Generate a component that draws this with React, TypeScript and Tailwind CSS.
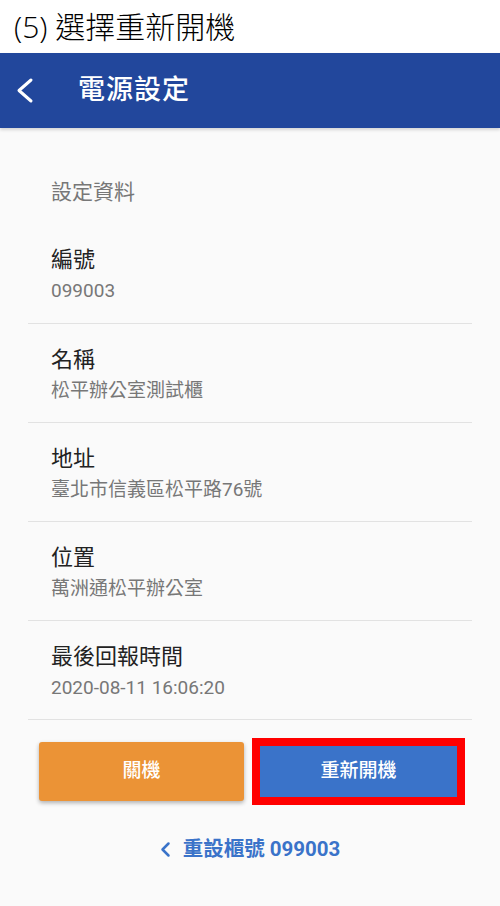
const CJK = "font-['Roboto','Noto_Sans_CJK_TC',sans-serif]";

const rows = [
  { label: "編號", value: "099003" },
  { label: "名稱", value: "松平辦公室測試櫃" },
  { label: "地址", value: "臺北市信義區松平路76號" },
  { label: "位置", value: "萬洲通松平辦公室" },
  { label: "最後回報時間", value: "2020-08-11 16:06:20" },
];

function Chevron({ className, w, h, sw }: { className?: string; w: number; h: number; sw: number }) {
  return (
    <svg className={className} width={w} height={h} viewBox={`0 0 ${w} ${h}`} fill="none">
      <polyline
        points={`${w - sw},${sw} ${sw},${h / 2} ${w - sw},${h - sw}`}
        stroke="currentColor"
        strokeWidth={sw}
        strokeLinecap="round"
        strokeLinejoin="round"
      />
    </svg>
  );
}

function InfoRow({ label, value, first }: { label: string; value: string; first?: boolean }) {
  return (
    <div className={first ? "px-[23px] pb-[20px]" : "border-t border-[#e2e2e2] px-[23px] pt-[21px] pb-[19px]"}>
      <div className="text-[22px] leading-[30px] text-[#222]">{label}</div>
      <div className="mt-1 text-[19px] leading-6 text-[#777]">{value}</div>
    </div>
  );
}

export default function App() {
  return (
    <div className={`min-h-[906px] w-[500px] bg-[#fafafa] ${CJK}`}>
      {/* caption */}
      <div className="flex h-[53px] items-center bg-white pl-[14px] font-['Open_Sans','Noto_Sans_CJK_TC',sans-serif] text-[30px] font-light text-black">
        (5) 選擇重新開機
      </div>

      {/* app bar */}
      <header className="flex h-[75px] items-center bg-[#22479c] text-white shadow-[0_2px_3px_rgba(0,0,0,0.15)]">
        <Chevron className="ml-[16px]" w={18} h={27} sw={3} />
        <h1 className="ml-[44px] text-[27px] font-medium tracking-[1px]">電源設定</h1>
      </header>

      <main className="px-7 pt-[49px]">
        <div className="px-[23px] text-[21px] leading-[30px] text-[#777]">設定資料</div>
        <div className="mt-[38px]">
          {rows.map((r, i) => (
            <InfoRow key={r.label} label={r.label} value={r.value} first={i === 0} />
          ))}
          <div className="border-t border-[#e2e2e2]" />
        </div>

        <div className="mt-[22px] flex gap-3 px-[11px]">
          <button className="h-[59px] flex-1 rounded-[3px] bg-[#eb9336] text-[19px] font-medium text-white shadow-[0_2px_4px_rgba(0,0,0,0.3)]">
            關機
          </button>
          <div className="relative flex-1">
            <button className="h-[59px] w-full rounded-[3px] bg-[#3a73c9] text-[19px] font-medium text-white">
              重新開機
            </button>
            <div className="pointer-events-none absolute -inset-1 border-8 border-[#ff0000]" />
          </div>
        </div>

        <div className="mt-[36px] flex items-center justify-center gap-[12px] text-[20.5px] font-bold leading-6 text-[#3a73c9]">
          <Chevron w={11} h={17} sw={2.5} />
          <span>重設櫃號 099003</span>
        </div>
      </main>
    </div>
  );
}
